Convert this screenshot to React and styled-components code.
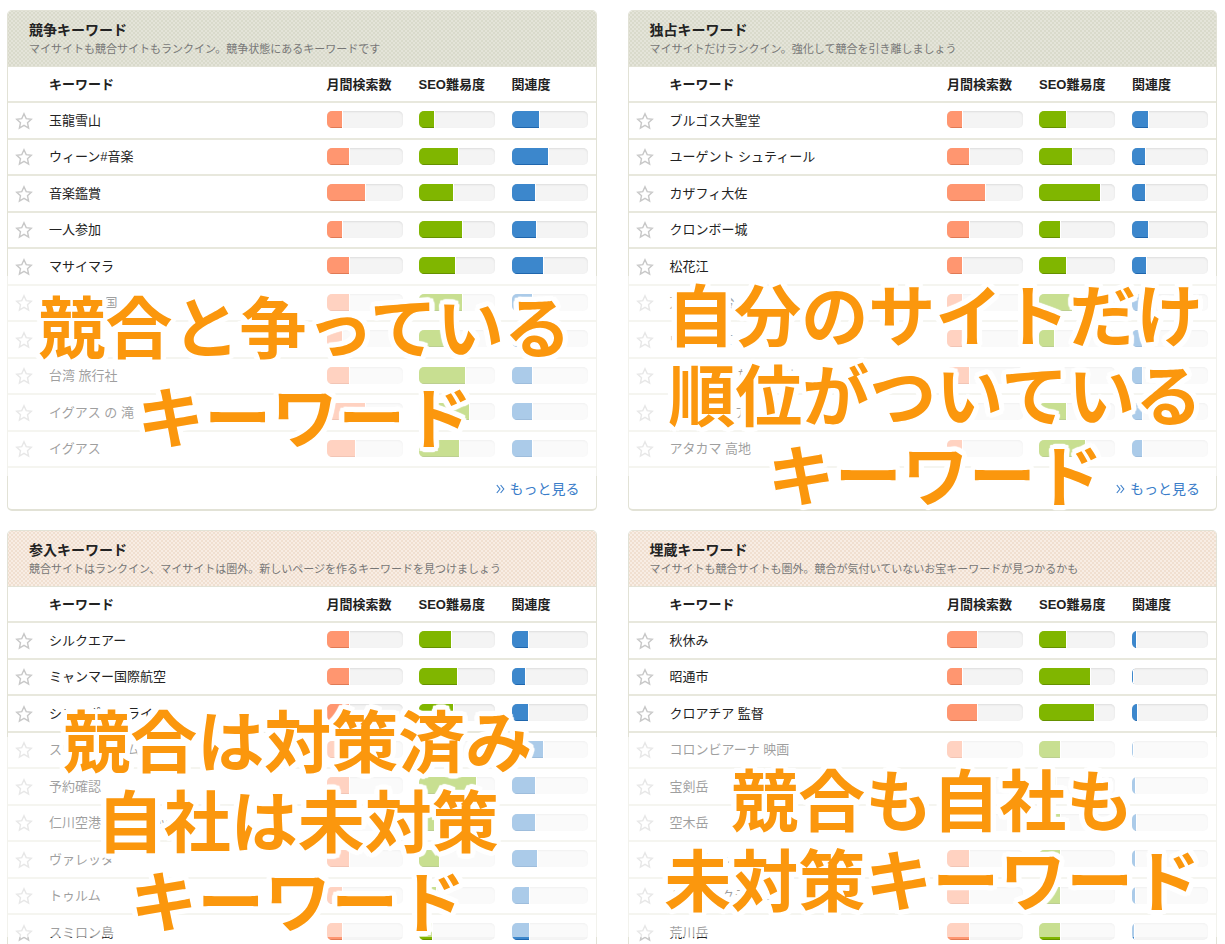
import React from "react";
import styled, { createGlobalStyle, css } from "styled-components";

const GlobalStyle = createGlobalStyle`
  * { box-sizing: border-box; }
  body {
    margin: 0;
    background: #fff;
    color: #222;
    font-family: "Liberation Sans", "Noto Sans CJK JP", sans-serif;
    font-size: 13px;
  }
`;

const Page = styled.main`
  height: 100vh;
  overflow: hidden;
  padding: 10px 8px 0 7px;
`;

const PanelGrid = styled.div`
  display: grid;
  grid-template-columns: repeat(2, minmax(0, 1fr));
  align-items: start;
  gap: 19px 31px;
`;

const Panel = styled.section`
  position: relative;
  border: 1px solid #e2e2d6;
  border-bottom-width: 2px;
  border-radius: 5px;
`;

const themes = {
  olive: css`
    background-color: #e4e4d9;
    --dot: #d9dacb;
  `,
  peach: css`
    background-color: #f8ede4;
    --dot: #f0dfd0;
  `,
};

const PanelHeader = styled.header`
  ${(p) => themes[p.$tone]}
  background-image: radial-gradient(circle, var(--dot) 1px, transparent 1px),
    radial-gradient(circle, var(--dot) 1px, transparent 1px);
  background-size: 4px 4px;
  background-position: 0 0, 2px 2px;
  height: 56px;
  padding: 9px 21px 0;
  border-bottom: 1px solid #e2e2d6;
  border-radius: 4px 4px 0 0;
`;

const Title = styled.h2`
  margin: 0;
  font-size: 14px;
  line-height: 20px;
`;

const Subtitle = styled.p`
  margin: 0;
  font-size: 11px;
  line-height: 18px;
  color: #777;
`;

const KeywordTable = styled.table`
  width: 100%;
  table-layout: fixed;
  border-collapse: separate;
  border-spacing: 0;
`;

const Col = styled.col`
  width: ${(p) => p.$width}px;
`;

const HeadCell = styled.th`
  height: 36px;
  padding: 2px 0 0;
  text-align: left;
  font-size: 13px;
  line-height: 18px;
  border-bottom: 2px solid #e8e8dd;
`;

const Row = styled.tr`
  height: 37px;
  &:nth-child(even) {
    height: 36px;
  }
`;

const Cell = styled.td`
  padding: 0;
  line-height: 18px;
  white-space: nowrap;
  border-bottom: 2px solid #e8e8dd;
`;

const StarButton = styled.button`
  display: block;
  margin-left: 7px;
  padding: 0;
  width: 18px;
  height: 18px;
  border: 0;
  background: none;
  color: #c8c8c8;
`;

const Track = styled.div`
  width: 76px;
  height: 17px;
  margin-bottom: 2px;
  border-radius: 5px;
  overflow: hidden;
  background: #f4f4f4;
  box-shadow: inset 0 1px 2px #dedede;
`;

const fills = {
  volume: css`
    background: #ff9670;
    box-shadow: inset 0 -1px 0 #e07a55;
  `,
  difficulty: css`
    background: #80b600;
    box-shadow: inset 0 -1px 0 #659100;
  `,
  relevance: css`
    background: #3c87cc;
    box-shadow: inset 0 -1px 0 #1f66ad;
  `,
};

const Fill = styled.div`
  height: 100%;
  border-right: 1px solid #fff;
  ${(p) => fills[p.$kind]}
`;

const PanelFooter = styled.footer`
  display: flex;
  justify-content: flex-end;
  align-items: center;
  height: 41px;
  padding: 0 16px;
`;

const MoreLink = styled.a`
  display: flex;
  align-items: center;
  gap: 5px;
  color: #3a7dc9;
  font-size: 14px;
  line-height: 20px;
  text-decoration: none;
`;

const Veil = styled.div`
  position: absolute;
  left: -2px;
  right: -2px;
  top: ${(p) => p.$top}px;
  height: 200px;
  background: rgba(255, 255, 255, 0.57);
  pointer-events: none;
`;

const roundOutline = (radius, color, steps = 24) =>
  Array.from({ length: steps }, (_, i) => {
    const angle = (i / steps) * Math.PI * 2;
    const x = Math.round(Math.cos(angle) * radius);
    const y = Math.round(Math.sin(angle) * radius);
    return `${x}px ${y}px 1px ${color}`;
  }).join(", ");

const captionOutline = `${roundOutline(5, "#fff")}, ${roundOutline(3, "#fff", 12)}`;

const Caption = styled.p`
  position: absolute;
  left: ${(p) => p.$shift}px;
  right: 0;
  top: ${(p) => p.$top}px;
  margin: 0;
  color: #fb970d;
  font-family: "Noto Sans CJK JP", sans-serif;
  font-size: 67px;
  font-weight: 700;
  line-height: ${(p) => p.$leading}px;
  text-align: center;
  white-space: nowrap;
  text-shadow: ${captionOutline};
  pointer-events: none;
`;

const CaptionLine = styled.span`
  display: block;
`;

const panels = [
  {
    title: "競争キーワード",
    subtitle: "マイサイトも競合サイトもランクイン。競争状態にあるキーワードです",
    tone: "olive",
    veilTop: 265,
    caption: { top: 268, shift: 6, leading: 90, lines: ["競合と争っている", "キーワード"] },
    more: true,
    rows: [
      ["玉龍雪山", 16, 16, 28],
      ["ウィーン#音楽", 23, 40, 37],
      ["音楽鑑賞", 39, 35, 24],
      ["一人参加", 16, 44, 25],
      ["マサイマラ", 23, 37, 32],
      ["バチカン 国", 23, 44, 21],
      ["ボリビア", 16, 35, 21],
      ["台湾 旅行社", 23, 47, 21],
      ["イグアス の 滝", 39, 51, 21],
      ["イグアス", 30, 41, 21],
    ],
  },
  {
    title: "独占キーワード",
    subtitle: "マイサイトだけランクイン。強化して競合を引き離しましょう",
    tone: "olive",
    veilTop: 265,
    caption: {
      top: 261,
      shift: 26,
      leading: 80,
      lines: ["自分のサイトだけ", "順位がついている", "キーワード"],
    },
    more: true,
    rows: [
      ["ブルゴス大聖堂", 16, 28, 17],
      ["ユーゲント シュティール", 23, 34, 14],
      ["カザフィ大佐", 39, 62, 14],
      ["クロンボー城", 23, 22, 17],
      ["松花江", 16, 28, 15],
      ["万里の長台", 16, 34, 11],
      ["ウユニって", 16, 16, 11],
      ["ヨーロッパ 旅行 個別", 23, 22, 11],
      ["カッパドキア", 16, 28, 11],
      ["アタカマ 高地", 16, 47, 11],
    ],
  },
  {
    title: "参入キーワード",
    subtitle: "競合サイトはランクイン、マイサイトは圏外。新しいページを作るキーワードを見つけましょう",
    tone: "peach",
    veilTop: 206,
    caption: {
      top: 167,
      shift: -8,
      leading: 80,
      lines: ["競合は対策済み", "自社は未対策", "キーワード"],
    },
    rows: [
      ["シルクエアー", 23, 33, 17],
      ["ミャンマー国際航空", 23, 39, 15],
      ["シンガポールライ", 23, 35, 17],
      ["スワンナプーム", 23, 44, 32],
      ["予約確認", 23, 58, 24],
      ["仁川空港 トランジット", 23, 16, 24],
      ["ヴァレッタ", 23, 21, 26],
      ["トゥルム", 16, 18, 18],
      ["スミロン島", 16, 15, 18],
    ],
  },
  {
    title: "埋蔵キーワード",
    subtitle: "マイサイトも競合サイトも圏外。競合が気付いていないお宝キーワードが見つかるかも",
    tone: "peach",
    veilTop: 206,
    caption: {
      top: 226,
      shift: 20,
      leading: 80,
      lines: ["競合も自社も", "未対策キーワード"],
    },
    rows: [
      ["秋休み", 31, 28, 5],
      ["昭通市", 16, 52, 2],
      ["クロアチア 監督", 31, 56, 6],
      ["コロンビアーナ 映画", 16, 22, 2],
      ["宝剣岳", 23, 18, 4],
      ["空木岳", 23, 22, 5],
      ["モンブラン", 23, 22, 4],
      ["トレッククライミン", 23, 22, 4],
      ["荒川岳", 23, 22, 3],
    ],
  },
];

const BAR_MAX = 76;

function Bar({ kind, label, value }) {
  return (
    <Track role="img" aria-label={label}>
      <Fill $kind={kind} style={{ width: `${(value / BAR_MAX) * 100}%` }} />
    </Track>
  );
}

function StarIcon() {
  return (
    <svg width="18" height="18" viewBox="0 0 18 18" fill="none" stroke="currentColor" strokeWidth="1.4" strokeLinejoin="miter" aria-hidden="true">
      <path d="M9 1.8 L11.2 6.6 L16.3 7.2 L12.5 10.7 L13.6 16 L9 13.3 L4.4 16 L5.5 10.7 L1.7 7.2 L6.8 6.6 Z" />
    </svg>
  );
}

function ChevronsIcon() {
  return (
    <svg width="9" height="10" viewBox="0 0 9 10" fill="none" stroke="currentColor" strokeWidth="1.1" aria-hidden="true">
      <path d="M0.8 1 L4 5 L0.8 9 M4.6 1 L7.8 5 L4.6 9" />
    </svg>
  );
}

function KeywordPanel({ title, subtitle, tone, veilTop, caption, more, rows }) {
  return (
    <Panel>
      <PanelHeader $tone={tone}>
        <Title>{title}</Title>
        <Subtitle>{subtitle}</Subtitle>
      </PanelHeader>
      <KeywordTable>
        <colgroup>
          <Col $width={41} />
          <col />
          <Col $width={92} />
          <Col $width={93} />
          <Col $width={84} />
        </colgroup>
        <thead>
          <tr>
            <HeadCell />
            <HeadCell scope="col">キーワード</HeadCell>
            <HeadCell scope="col">月間検索数</HeadCell>
            <HeadCell scope="col">SEO難易度</HeadCell>
            <HeadCell scope="col">関連度</HeadCell>
          </tr>
        </thead>
        <tbody>
          {rows.map(([keyword, volume, difficulty, relevance]) => (
            <Row key={keyword}>
              <Cell>
                <StarButton type="button" aria-label={keyword}>
                  <StarIcon />
                </StarButton>
              </Cell>
              <Cell>{keyword}</Cell>
              <Cell>
                <Bar kind="volume" label="月間検索数" value={volume} />
              </Cell>
              <Cell>
                <Bar kind="difficulty" label="SEO難易度" value={difficulty} />
              </Cell>
              <Cell>
                <Bar kind="relevance" label="関連度" value={relevance} />
              </Cell>
            </Row>
          ))}
        </tbody>
      </KeywordTable>
      {more && (
        <PanelFooter>
          <MoreLink href="#more">
            <ChevronsIcon />
            もっと見る
          </MoreLink>
        </PanelFooter>
      )}
      <Veil $top={veilTop} />
      <Caption $top={caption.top} $shift={caption.shift} $leading={caption.leading}>
        {caption.lines.map((line) => (
          <CaptionLine key={line}>{line}</CaptionLine>
        ))}
      </Caption>
    </Panel>
  );
}

export default function App() {
  return (
    <>
      <GlobalStyle />
      <Page>
        <PanelGrid>
          {panels.map((panel) => (
            <KeywordPanel key={panel.title} {...panel} />
          ))}
        </PanelGrid>
      </Page>
    </>
  );
}
